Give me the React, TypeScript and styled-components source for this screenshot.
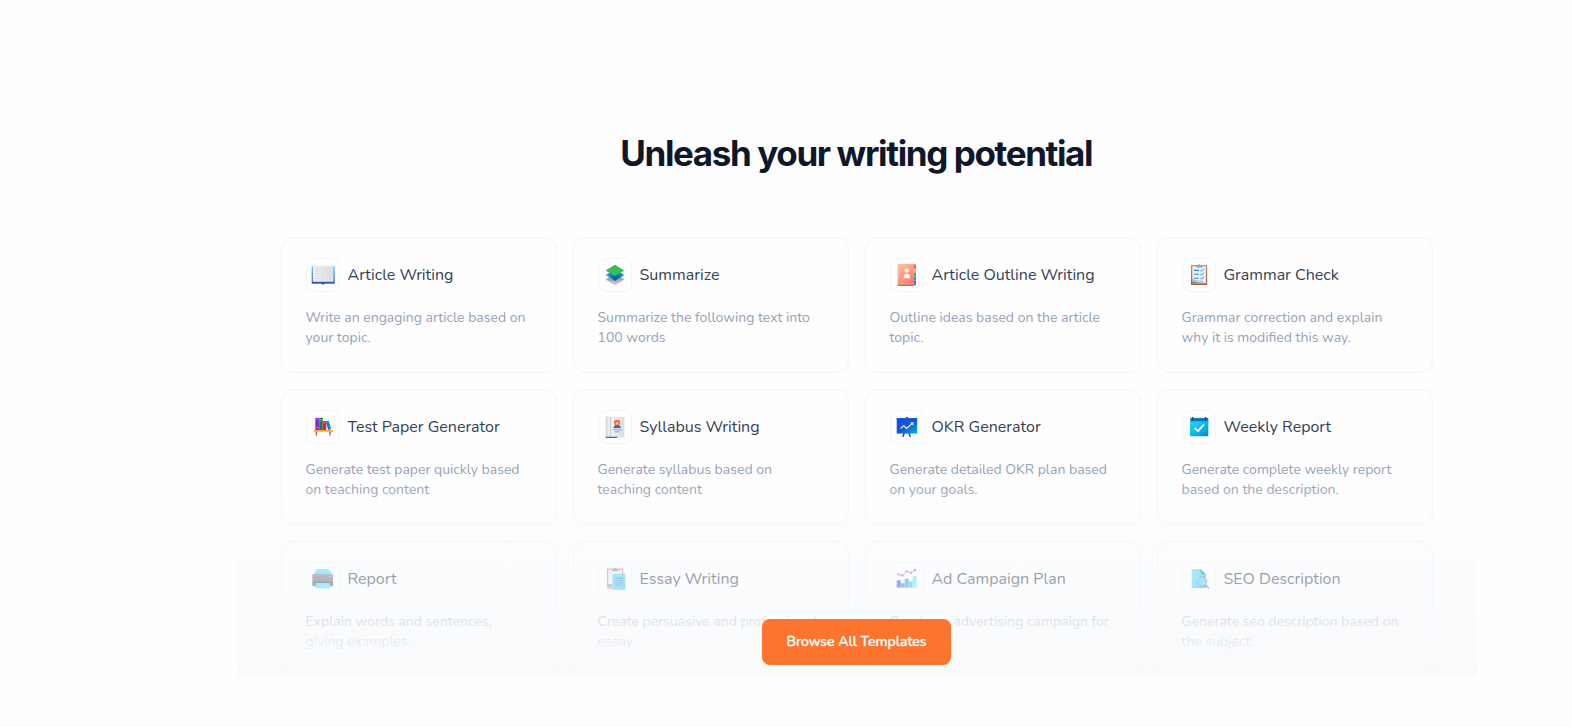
import React from "react";
import styled, { createGlobalStyle } from "styled-components";

const GlobalStyle = createGlobalStyle`
  *, *::before, *::after { box-sizing: border-box; }
  body {
    margin: 0;
    background: #fefefe;
    font-family: Nunito, Lato, "Open Sans", sans-serif;
    overflow: hidden;
  }
`;

const Page = styled.main`
  height: 727px;
  padding: 129px 95px 0 237px;
  overflow: hidden;
`;

const Section = styled.section`
  position: relative;
  height: 548px;
  padding: 0 44px;
`;

const Heading = styled.h2`
  margin: 0 0 59px;
  padding-right: 1.6px;
  font: 700 35px/49px Inter, sans-serif;
  letter-spacing: -1.38px;
  text-align: center;
  color: #0f172a;
`;

const CardGrid = styled.div`
  display: grid;
  grid-template-columns: repeat(4, 1fr);
  grid-auto-rows: 136px;
  gap: 16px;
`;

const Card = styled.article`
  padding: 20px 24px 24px;
  border: 1px solid #f1f5f9;
  border-radius: 12px;
`;

const CardHeader = styled.header`
  display: flex;
  align-items: center;
  gap: 7.5px;
  margin-bottom: 16px;
`;

const IconBox = styled.div`
  display: flex;
  flex: none;
  width: 34px;
  height: 34px;
  padding: 4px;
  border: 1px solid #f1f5f9;
  border-radius: 8px;
`;

const Title = styled.h3`
  margin: 0;
  font-size: 16px;
  font-weight: 400;
  line-height: 24px;
  white-space: nowrap;
  color: #334155;
`;

const Description = styled.p`
  margin: 0 0 0 -0.5px;
  font-size: 14px;
  line-height: 20px;
  white-space: pre;
  color: #94a3b8;
`;

const Fade = styled.div`
  position: absolute;
  inset: auto 0 0;
  height: 200px;
  display: flex;
  align-items: flex-end;
  justify-content: center;
  padding: 0 1px 12px 0;
  background: linear-gradient(to bottom, rgba(248, 250, 252, 0), #f8fafc);
`;

const BrowseButton = styled.button`
  width: 189px;
  height: 46px;
  padding: 0;
  border: 0;
  border-radius: 8px;
  background: #fd742f;
  color: #fff;
  font: 500 14px/20px Nunito, Lato, sans-serif;
  -webkit-text-stroke: 0.35px #fff;
  white-space: nowrap;
`;

const NextPanel = styled.div`
  width: 860px;
  height: 80px;
  margin: 52px auto 0;
  border-radius: 24px;
  box-shadow: 0 0 10px rgba(15, 23, 42, 0.015);
`;

const BookIcon = () => (
  <svg width="24" height="24" viewBox="0 0 24 24">
    <defs>
      <linearGradient id="bookCover" x1="0" y1="0" x2="0" y2="1">
        <stop offset="0" stopColor="#4cc4f7" />
        <stop offset="1" stopColor="#2a52a0" />
      </linearGradient>
      <linearGradient id="bookPage">
        <stop offset="0" stopColor="#f0f0f4" />
        <stop offset="1" stopColor="#e0e0e8" />
      </linearGradient>
    </defs>
    <path d="M.7 3h23v17.7H.7z" fill="url(#bookCover)" />
    <path d="M1.8 2.8h10v16H1.8zM12.2 2.8h10.300v16H12.2z" fill="url(#bookPage)" />
    <path d="M11.7 3h.8v16.2h-.8z" fill="#f8f8fb" />
    <path d="M3.5 5.5h6.2M3.5 8h6.2M3.5 10.5h6.2M3.5 13h6.2M3.5 15.5h6.2M14 5.5h6.5M14 8h6.5M14 10.5h6.5M14 13h6.5M14 15.5h6.5" stroke="#d2d2dc" strokeWidth=".6" />
    <path d="M10.8 20h2.7v1.3h-2.700z" fill="#24457f" />
  </svg>
);

const LayersIcon = () => (
  <svg width="24" height="24" viewBox="0 0 24 24">
    <defs>
      <linearGradient id="layerBlue">
        <stop offset="0" stopColor="#1dbcf5" />
        <stop offset=".5" stopColor="#075d9e" />
        <stop offset="1" stopColor="#0da2ed" />
      </linearGradient>
      <linearGradient id="layerGrey" x1="0" y1="0" x2="0" y2="1">
        <stop offset=".4" stopColor="#9c9cad" />
        <stop offset="1" stopColor="#d5d5de" />
      </linearGradient>
    </defs>
    <path d="M2.7 16.5 12 10.5l9.3 6L12 22.2z" fill="url(#layerGrey)" />
    <path d="M2.7 12 12 6l9.300 6L12 18z" fill="url(#layerBlue)" />
    <path d="M2.7 7.4 12 1.7l9.3 5.700L12 13.2z" fill="#35bd5b" />
  </svg>
);

const ContactsIcon = () => (
  <svg width="24" height="24" viewBox="0 0 24 24">
    <defs>
      <linearGradient id="contactsCover" x1="0" y1="0" x2=".6" y2="1">
        <stop offset="0" stopColor="#ffc4a0" />
        <stop offset="1" stopColor="#fb7c6d" />
      </linearGradient>
    </defs>
    <path d="M18.5 1.5h2.500v4.300h-2.500z" fill="#e05b90" />
    <path d="M18.5 5.8h2.500v3.800h-2.500z" fill="#f5bd4b" />
    <path d="M18.5 9.6h2.500v4h-2.500z" fill="#3cba73" />
    <path d="M18.5 13.6h2.500v4h-2.500z" fill="#2790df" />
    <path d="M18.5 17.6h2.500v4.600h-2.500z" fill="#8b4dc5" />
    <rect x="2.700" y=".8" width="16.200" height="22" rx=".7" fill="url(#contactsCover)" />
    <path d="M2.7 21.200h16.200v1.100a.7.7 0 0 1-.7.700H3.400a.7.7 0 0 1-.7-.7z" fill="#bf7065" />
    <path d="M3.3 20.700h16.500v.6H3.300z" fill="#e8b5ab" />
    <circle cx="11.800" cy="7.600" r="2.100" fill="#fff1ec" />
    <path d="M8.7 15.300v-1.500a3.100 3.100 0 0 1 6.200 0v1.500z" fill="#fff1ec" />
  </svg>
);

const ClipboardIcon = () => (
  <svg width="24" height="24" viewBox="0 0 24 24">
    <defs>
      <linearGradient id="clipBoard" x1="0" y1="0" x2="0" y2="1">
        <stop offset="0" stopColor="#d98a6c" />
        <stop offset="1" stopColor="#a9583f" />
      </linearGradient>
    </defs>
    <rect x="4" y="2" width="16.200" height="20" rx=".8" fill="url(#clipBoard)" />
    <path d="M5.300 3.300h13.600v17.300l-4.600-1.200-9-3.400z" fill="#edf0f7" />
    <path d="M5.300 15.500c3 2.500 7.500 2.600 9 1.500l4.600 3.600H5.300z" fill="#c5c7d0" />
    <path d="M5.300 18.200c3 .3 6 1.500 8 2.400h-8z" fill="#8f8790" />
    <path d="M7 7.400h5M7 11.300h5M7 15.200h4.700" stroke="#2f86dd" strokeWidth="1.100" />
    <path d="m13.500 7 1.100 1.200 2.300-2.500M13.500 11l1.100 1.200 2.300-2.500M13.500 15l1.100 1.200 2.300-2.500" fill="none" stroke="#2b9aef" strokeWidth="1" />
    <path d="M9 4.500V3h1.700c.1-2.500 2.900-2.500 3 0h1.700v1.500z" fill="#a5a5ad" />
  </svg>
);

const BooksIcon = () => (
  <svg width="24" height="24" viewBox="0 0 24 24">
    <path d="M4.300 2.800h3.700V15H4.300z" fill="#8f27c4" />
    <path d="M4.300 4.200h3.700M4.300 12.500h3.700" stroke="#c468ec" strokeWidth=".8" />
    <path d="M8.200 2.800h3.600V15H8.200z" fill="#168345" />
    <path d="M8.200 4.500h3.600M8.200 6h3.600" stroke="#4dc174" strokeWidth=".7" />
    <path d="M11.700 6h3.600v9h-3.600z" fill="#d32c2d" />
    <path d="M11.700 7.800h3.600" stroke="#f77a65" strokeWidth=".8" />
    <path d="m14.600 6.600 3-.8L20.200 14l-3 .9z" fill="#197fdd" />
    <path d="M4.600 16.500h1.900L5.700 21h-.8zM18 16.500h1.900l-.4 4.500h-.8z" fill="#d5502d" />
    <rect x="2.600" y="14.900" width="19.500" height="1.900" rx=".5" fill="#f7a63b" />
  </svg>
);

const SyllabusIcon = () => (
  <svg width="24" height="24" viewBox="0 0 24 24">
    <defs>
      <linearGradient id="syllabusPage">
        <stop offset="0" stopColor="#d2d2da" />
        <stop offset=".2" stopColor="#f1f1f5" />
        <stop offset=".25" stopColor="#c9c9d2" />
        <stop offset=".32" stopColor="#f1f1f6" />
        <stop offset="1" stopColor="#dadae3" />
      </linearGradient>
    </defs>
    <path d="M2.700 1.500c1.500-.3 3 0 4.400.6h14.200v20.500H7.200L2.700 22z" fill="url(#syllabusPage)" />
    <path d="M2.700 21.700h12l-1 1.300h-11z" fill="#52657b" />
    <circle cx="14.100" cy="7.800" r="3.100" fill="#f26447" />
    <path d="M10.700 13v-1c0-2.400 6.900-2.400 6.900 0v1z" fill="#2867cc" />
    <circle cx="14.100" cy="8.300" r="1.500" fill="#ffc35b" />
    <path d="M10 14.600h8.500M11.300 16.800h5.900" stroke="#55b8f3" strokeWidth="1" />
  </svg>
);

const PresentationIcon = () => (
  <svg width="24" height="24" viewBox="0 0 24 24">
    <defs>
      <linearGradient id="presentation" x1="0" y1="0" x2="1" y2="1">
        <stop offset="0" stopColor="#1b4ae8" />
        <stop offset=".5" stopColor="#0c57da" />
        <stop offset="1" stopColor="#06b2e2" />
      </linearGradient>
    </defs>
    <path d="M10.900 2h1.900v2h-1.900z" fill="#1844ae" />
    <path d="m9.300 18-1.500 3.800M13.800 18l1.500 3.800" stroke="#14379e" strokeWidth="1.400" />
    <path d="M1.700 3h20.500v15.600H1.700z" fill="url(#presentation)" />
    <path d="M1.700 3h20.500v1H1.700z" fill="#1761d5" />
    <path d="m5.600 13.700 3.200-3.200 2.700 2.900 5.900-5.100" fill="none" stroke="#eaf5ff" strokeWidth="1.200" />
    <path d="m15.200 7.600 3.300-.3-.4 3.200z" fill="#eaf5ff" />
  </svg>
);

const CalendarIcon = () => (
  <svg width="24" height="24" viewBox="0 0 24 24">
    <defs>
      <linearGradient id="calendar" x1="0" y1="0" x2="1" y2="1">
        <stop offset="0" stopColor="#28d2f7" />
        <stop offset=".5" stopColor="#0db9ef" />
        <stop offset="1" stopColor="#0788cf" />
      </linearGradient>
    </defs>
    <path d="M3.300 3h18v5h-18z" fill="#1876ac" />
    <path d="M3 6.300h18.300v15H3z" fill="url(#calendar)" />
    <path d="M5.600 2v3.600M18.600 2v3.600" stroke="#114d7a" strokeWidth="1.400" />
    <path d="m7.600 12.800 3.400 3.400 6-6.700" fill="none" stroke="#fff" strokeWidth="1.800" />
  </svg>
);

const PrinterIcon = () => (
  <svg width="24" height="24" viewBox="0 0 24 24">
    <defs>
      <linearGradient id="printerBody" x1="0" y1="0" x2="0" y2="1">
        <stop offset="0" stopColor="#85858d" />
        <stop offset="1" stopColor="#4b4b54" />
      </linearGradient>
    </defs>
    <path d="M3.700 7V4h1.600V2h12.900v2h1.600v3z" fill="#4fe0ff" />
    <rect x="1.300" y="6.700" width="20.700" height="12.600" rx="1.500" fill="url(#printerBody)" />
    <path d="M3.600 15.200h16.200V16.600H3.600z" fill="#2e2e36" />
    <path d="M4.700 16h14.200v5.400H4.700z" fill="#45deff" />
    <circle cx="19" cy="9.500" r=".9" fill="#4dd9f6" />
  </svg>
);

const EssayIcon = () => (
  <svg width="24" height="24" viewBox="0 0 24 24">
    <defs>
      <linearGradient id="essaySheet" x1="0" y1="0" x2="1" y2="1">
        <stop offset="0" stopColor="#60dffc" />
        <stop offset="1" stopColor="#35b5e0" />
      </linearGradient>
    </defs>
    <rect x="4" y="1.500" width="16.200" height="20.200" rx=".8" fill="#d38a70" />
    <path d="M5.200 2.800H19v17.500H8.300l-3.100-3z" fill="#efeff4" />
    <path d="M5.200 17h4v3.300h-4z" fill="#a1979b" />
    <path d="M9 4.300V2.500h1.700c.1-2.200 2.900-2.200 3 0h1.700v1.800z" fill="#96969e" />
    <path d="M9.300 6.800h13v16h-13z" fill="url(#essaySheet)" />
    <path d="M12 11.300h8M12 13.600h8M12 15.900h8M12 18.200h6" stroke="#347ec8" strokeWidth=".9" />
  </svg>
);

const ChartIcon = () => (
  <svg width="24" height="24" viewBox="0 0 24 24">
    <path d="M1.700 13.300h4v7.400h-4z" fill="#1c61c8" />
    <path d="M5.700 16.200h4v4.500h-4z" fill="#317edb" />
    <path d="M9.700 11.700h4v9h-4z" fill="#2897de" />
    <path d="M13.700 14.300h4v6.400h-4z" fill="#36b7e6" />
    <path d="M17.700 9h4v11.700h-4z" fill="#64e8fa" />
    <path d="m3.300 7.400 4.100 1 4.300-4 4.300 1.300 4.100-2.700" fill="none" stroke="#c76bd8" strokeWidth=".9" />
    <g fill="#c354d3">
      <circle cx="3.300" cy="7.400" r="1.200" />
      <circle cx="7.400" cy="8.400" r="1.200" />
      <circle cx="11.700" cy="4.400" r="1.200" />
      <circle cx="16" cy="5.700" r="1.200" />
      <circle cx="20.100" cy="3" r="1.200" />
    </g>
  </svg>
);

const SearchDocIcon = () => (
  <svg width="24" height="24" viewBox="0 0 24 24">
    <defs>
      <linearGradient id="searchDoc" x1="0" y1="0" x2=".8" y2="1">
        <stop offset="0" stopColor="#68ebff" />
        <stop offset="1" stopColor="#2bade8" />
      </linearGradient>
    </defs>
    <path d="M4.700 2h9l5.300 5.600V21H4.700z" fill="url(#searchDoc)" />
    <path d="M13.700 2v5.600H19z" fill="#318bc0" />
    <path d="m18.200 17.500 3.700 3.800" stroke="#356da1" strokeWidth="1.500" />
    <circle cx="15.300" cy="14.500" r="4.500" fill="#69c5e4" stroke="#4689bd" strokeWidth=".9" />
  </svg>
);

type Template = { title: string; lines: string[]; Icon: React.ComponentType };

const templates: Template[] = [
  { title: "Article Writing", lines: ["Write an engaging article based on", "your topic."], Icon: BookIcon },
  { title: "Summarize", lines: ["Summarize the following text into", "100 words"], Icon: LayersIcon },
  { title: "Article Outline Writing", lines: ["Outline ideas based on the article", "topic."], Icon: ContactsIcon },
  { title: "Grammar Check", lines: ["Grammar correction and explain", "why it is modified this way."], Icon: ClipboardIcon },
  { title: "Test Paper Generator", lines: ["Generate test paper quickly based", "on teaching content"], Icon: BooksIcon },
  { title: "Syllabus Writing", lines: ["Generate syllabus based on", "teaching content"], Icon: SyllabusIcon },
  { title: "OKR Generator", lines: ["Generate detailed OKR plan based", "on your goals."], Icon: PresentationIcon },
  { title: "Weekly Report", lines: ["Generate complete weekly report", "based on the description."], Icon: CalendarIcon },
  { title: "Report", lines: ["Explain words and sentences,", "giving examples."], Icon: PrinterIcon },
  { title: "Essay Writing", lines: ["Create persuasive and professional", "essay"], Icon: EssayIcon },
  { title: "Ad Campaign Plan", lines: ["Create an advertising campaign for"], Icon: ChartIcon },
  { title: "SEO Description", lines: ["Generate seo description based on", "the subject."], Icon: SearchDocIcon },
];

export default function App() {
  return (
    <>
      <GlobalStyle />
      <Page>
        <Section>
          <Heading>Unleash your writing potential</Heading>
          <CardGrid>
            {templates.map(({ title, lines, Icon }) => (
              <Card key={title}>
                <CardHeader>
                  <IconBox>
                    <Icon />
                  </IconBox>
                  <Title>{title}</Title>
                </CardHeader>
                <Description>{lines.join("\n")}</Description>
              </Card>
            ))}
          </CardGrid>
          <Fade>
            <BrowseButton>Browse All Templates</BrowseButton>
          </Fade>
        </Section>
        <NextPanel />
      </Page>
    </>
  );
}
